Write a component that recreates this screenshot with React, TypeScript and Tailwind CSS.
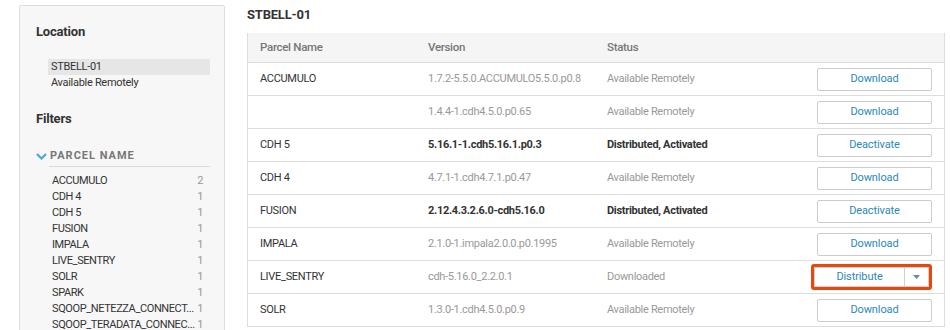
import React from "react";

const font = { fontFamily: "Roboto, 'Liberation Sans', sans-serif" };

const filters: [string, number][] = [
  ["ACCUMULO", 2],
  ["CDH 4", 1],
  ["CDH 5", 1],
  ["FUSION", 1],
  ["IMPALA", 1],
  ["LIVE_SENTRY", 1],
  ["SOLR", 1],
  ["SPARK", 1],
  ["SQOOP_NETEZZA_CONNECT...", 1],
  ["SQOOP_TERADATA_CONNEC...", 1],
];

type Row = { name: string; version: string; status: string; bold?: boolean; action: string };

const rows: Row[] = [
  { name: "ACCUMULO", version: "1.7.2-5.5.0.ACCUMULO5.5.0.p0.8", status: "Available Remotely", action: "Download" },
  { name: "", version: "1.4.4-1.cdh4.5.0.p0.65", status: "Available Remotely", action: "Download" },
  { name: "CDH 5", version: "5.16.1-1.cdh5.16.1.p0.3", status: "Distributed, Activated", bold: true, action: "Deactivate" },
  { name: "CDH 4", version: "4.7.1-1.cdh4.7.1.p0.47", status: "Available Remotely", action: "Download" },
  { name: "FUSION", version: "2.12.4.3.2.6.0-cdh5.16.0", status: "Distributed, Activated", bold: true, action: "Deactivate" },
  { name: "IMPALA", version: "2.1.0-1.impala2.0.0.p0.1995", status: "Available Remotely", action: "Download" },
  { name: "LIVE_SENTRY", version: "cdh-5.16.0_2.2.0.1", status: "Downloaded", action: "Distribute" },
  { name: "SOLR", version: "1.3.0-1.cdh4.5.0.p0.9", status: "Available Remotely", action: "Download" },
];

function ActionButton({ action }: { action: string }) {
  if (action === "Distribute") {
    return (
      <div className="border-[3px] border-[#e8470e] rounded-[3px] w-[121px] h-[26px] ml-[-6px] flex">
        <div className="flex-1 flex bg-white border border-[#cfcfcf]">
          <div className="flex-1 flex items-center justify-center text-[11px] tracking-[-0.1px] text-[#2b88bd]">Distribute</div>
          <div className="w-[24px] border-l border-[#cfcfcf] flex items-center justify-center">
            <svg width="7" height="4" viewBox="0 0 7 4"><path d="M0 0 L7 0 L3.5 4 Z" fill="#5a8fb0" /></svg>
          </div>
        </div>
      </div>
    );
  }
  return (
    <div className="w-[115px] h-[23px] border border-[#cccccc] rounded-[2px] bg-white flex items-center justify-center text-[11px] tracking-[-0.1px] text-[#2b88bd]">
      {action}
    </div>
  );
}

export default function App() {
  return (
    <div className="w-[950px] h-[330px] overflow-hidden bg-white flex pl-[19px] pt-[5px] gap-[22px] tracking-[-0.3px]" style={font}>
      <div className="w-[206px] h-[340px] shrink-0 bg-[#f7f7f7] border border-[#dddddd] rounded-[2px] pl-[16px] pr-[14px] pt-[17px]">
        <div className="text-[13px] font-bold text-[#333] leading-[18px] tracking-[-0.2px]">Location</div>
        <div className="mt-[18px] pl-[12px]">
          <div className="bg-[#e6e6e6] h-[16px] pl-[3px] text-[11px] leading-[16px] text-[#333]">STBELL-01</div>
          <div className="pl-[3px] text-[11px] leading-[16px] text-[#333]">Available Remotely</div>
        </div>
        <div className="mt-[19px] text-[13px] font-bold text-[#333] leading-[18px] tracking-[-0.2px]">Filters</div>
        <div className="mt-[20px] flex items-center h-[16px]">
          <svg width="11" height="7" viewBox="0 0 11 7" className="mr-[3px]">
            <path d="M1 1 L5.5 5.5 L10 1" fill="none" stroke="#4aa6dd" strokeWidth="2.2" />
          </svg>
          <span className="text-[11px] font-bold tracking-[1px] text-[#777]">PARCEL NAME</span>
        </div>
        <div className="ml-[13px] mt-[2px] border-t border-[#d9d9d9]" />
        <div className="ml-[13px] mt-[6px] pl-[3px] pr-[7px]">
          {filters.map(([n, c]) => (
            <div key={n} className="flex justify-between gap-[2px] h-[16px] leading-[16px] text-[11px] tracking-[-0.4px]">
              <span className="text-[#333] whitespace-nowrap">{n}</span>
              <span className="text-[#999]">{c}</span>
            </div>
          ))}
        </div>
      </div>
      <div className="w-[698px] shrink-0">
        <div className="text-[13px] font-bold text-[#333] leading-[18px] pt-[1px] tracking-[-0.2px]">STBELL-01</div>
        <div className="mt-[9px] border-l border-r border-[#dddddd]">
          <div className="flex items-center h-[30px] bg-[#f5f5f5] border-b border-[#dddddd] text-[11.5px] font-medium text-[#777]">
            <div className="w-[180px] pl-[12px]">Parcel Name</div>
            <div className="w-[179px]">Version</div>
            <div className="flex-1">Status</div>
          </div>
          {rows.map((r, i) => (
            <div key={i} className="flex items-center h-[33px] border-b border-[#dddddd] text-[11px]">
              <div className="w-[180px] pl-[12px] text-[#333]">{r.name}</div>
              <div className={r.bold ? "w-[179px] font-bold text-[#333]" : "w-[179px] text-[#999]"}>{r.version}</div>
              <div className={r.bold ? "flex-1 font-bold text-[#333]" : "flex-1 text-[#999]"}>{r.status}</div>
              <div className="pr-[12px]">
                <ActionButton action={r.action} />
              </div>
            </div>
          ))}
        </div>
      </div>
    </div>
  );
}
